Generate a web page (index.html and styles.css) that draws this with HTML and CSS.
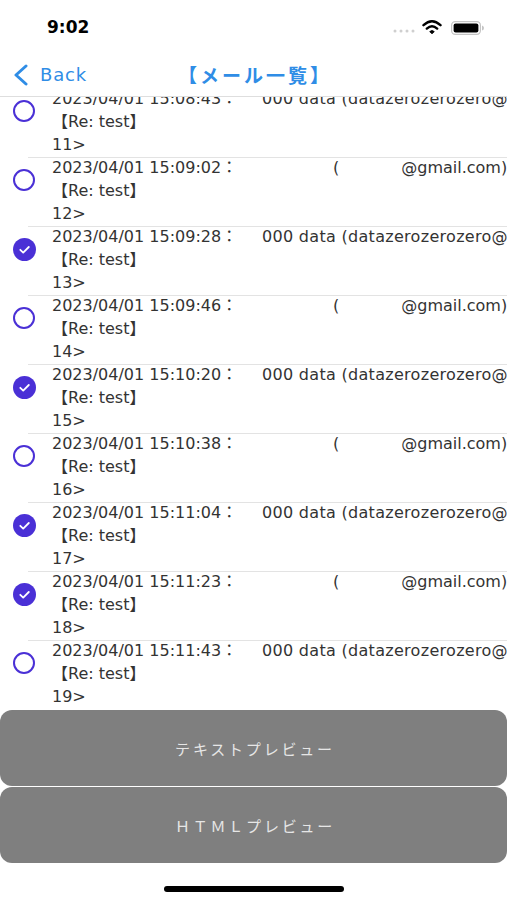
FILE: index.html
```html
<!DOCTYPE html>
<html lang="ja">
<head>
<meta charset="utf-8">
<title>メール一覧</title>
<link rel="stylesheet" href="styles.css">
</head>
<body>
<div class="screen">
  <header class="status">
    <span class="time">9:02</span>
    <svg class="status-icons" width="92" height="18" viewBox="0 0 92 18">
      <circle cx="2" cy="13" r="1.5" fill="#cfcfcf"/>
      <circle cx="8" cy="13" r="1.5" fill="#cfcfcf"/>
      <circle cx="14" cy="13" r="1.5" fill="#cfcfcf"/>
      <circle cx="20" cy="13" r="1.5" fill="#cfcfcf"/>
      <path d="M30.5 7.2 Q39 -0.6 47.5 7.2" fill="none" stroke="#000" stroke-width="2.4" stroke-linecap="round"/>
      <path d="M33.8 10.6 Q39 5.8 44.2 10.6" fill="none" stroke="#000" stroke-width="2.4" stroke-linecap="round"/>
      <path d="M36.8 13.6 L39 15.8 L41.2 13.6 Q39 11.6 36.8 13.6 Z" fill="#000" stroke="#000" stroke-width="1" stroke-linejoin="round"/>
      <rect x="58.6" y="3.6" width="28.8" height="12.8" rx="3.6" fill="none" stroke="#c4c4c4" stroke-width="1.2"/>
      <rect x="60.6" y="5.6" width="24.8" height="8.8" rx="2" fill="#000"/>
      <path d="M89 7.5 Q91 8 91 10 Q91 12 89 12.5 Z" fill="#c4c4c4"/>
    </svg>
  </header>

  <nav class="navbar">
    <a class="back">
      <svg class="chev" width="16" height="22" viewBox="0 0 16 22"><path d="M13 2 L3 11 L13 20" fill="none" stroke="currentColor" stroke-width="3" stroke-linecap="round" stroke-linejoin="round"/></svg>
      <span>Back</span>
    </a>
    <h1 class="title">【メール一覧】</h1>
    <span class="nav-spacer"></span>
  </nav>

  <main class="list">
    <div class="list-inner">
      <div class="row">
        <div class="check-col"><span class="check"></span></div>
        <div class="text">
          <div class="line"><span class="date">2023/04/01 15:08:43：</span><span class="from">000 data (datazerozerozero@gmail.com)</span></div>
          <div class="line">【Re: test】</div>
          <div class="line">11&gt;</div>
        </div>
      </div>
      <div class="row">
        <div class="check-col"><span class="check"></span></div>
        <div class="text">
          <div class="line"><span class="date">2023/04/01 15:09:02：</span><span class="masked"><span class="paren">(</span><span class="blank"></span>@gmail.com)</span></div>
          <div class="line">【Re: test】</div>
          <div class="line">12&gt;</div>
        </div>
      </div>
      <div class="row">
        <div class="check-col"><span class="check on"><svg width="23" height="23" viewBox="0 0 23 23"><path d="M7.3 11.8 L10.2 14.6 L15.8 9" fill="none" stroke="#fff" stroke-width="1.8" stroke-linecap="round" stroke-linejoin="round"/></svg></span></div>
        <div class="text">
          <div class="line"><span class="date">2023/04/01 15:09:28：</span><span class="from">000 data (datazerozerozero@gmail.com)</span></div>
          <div class="line">【Re: test】</div>
          <div class="line">13&gt;</div>
        </div>
      </div>
      <div class="row">
        <div class="check-col"><span class="check"></span></div>
        <div class="text">
          <div class="line"><span class="date">2023/04/01 15:09:46：</span><span class="masked"><span class="paren">(</span><span class="blank"></span>@gmail.com)</span></div>
          <div class="line">【Re: test】</div>
          <div class="line">14&gt;</div>
        </div>
      </div>
      <div class="row">
        <div class="check-col"><span class="check on"><svg width="23" height="23" viewBox="0 0 23 23"><path d="M7.3 11.8 L10.2 14.6 L15.8 9" fill="none" stroke="#fff" stroke-width="1.8" stroke-linecap="round" stroke-linejoin="round"/></svg></span></div>
        <div class="text">
          <div class="line"><span class="date">2023/04/01 15:10:20：</span><span class="from">000 data (datazerozerozero@gmail.com)</span></div>
          <div class="line">【Re: test】</div>
          <div class="line">15&gt;</div>
        </div>
      </div>
      <div class="row">
        <div class="check-col"><span class="check"></span></div>
        <div class="text">
          <div class="line"><span class="date">2023/04/01 15:10:38：</span><span class="masked"><span class="paren">(</span><span class="blank"></span>@gmail.com)</span></div>
          <div class="line">【Re: test】</div>
          <div class="line">16&gt;</div>
        </div>
      </div>
      <div class="row">
        <div class="check-col"><span class="check on"><svg width="23" height="23" viewBox="0 0 23 23"><path d="M7.3 11.8 L10.2 14.6 L15.8 9" fill="none" stroke="#fff" stroke-width="1.8" stroke-linecap="round" stroke-linejoin="round"/></svg></span></div>
        <div class="text">
          <div class="line"><span class="date">2023/04/01 15:11:04：</span><span class="from">000 data (datazerozerozero@gmail.com)</span></div>
          <div class="line">【Re: test】</div>
          <div class="line">17&gt;</div>
        </div>
      </div>
      <div class="row">
        <div class="check-col"><span class="check on"><svg width="23" height="23" viewBox="0 0 23 23"><path d="M7.3 11.8 L10.2 14.6 L15.8 9" fill="none" stroke="#fff" stroke-width="1.8" stroke-linecap="round" stroke-linejoin="round"/></svg></span></div>
        <div class="text">
          <div class="line"><span class="date">2023/04/01 15:11:23：</span><span class="masked"><span class="paren">(</span><span class="blank"></span>@gmail.com)</span></div>
          <div class="line">【Re: test】</div>
          <div class="line">18&gt;</div>
        </div>
      </div>
      <div class="row">
        <div class="check-col"><span class="check"></span></div>
        <div class="text">
          <div class="line"><span class="date">2023/04/01 15:11:43：</span><span class="from">000 data (datazerozerozero@gmail.com)</span></div>
          <div class="line">【Re: test】</div>
          <div class="line">19&gt;</div>
        </div>
      </div>
    </div>
  </main>

  <div class="actions">
    <button class="btn">テキストプレビュー</button>
    <button class="btn">ＨＴＭＬプレビュー</button>
  </div>

  <div class="home"><span class="indicator"></span></div>
</div>
</body>
</html>
```

FILE: styles.css
```css
* { box-sizing: border-box; }

html, body {
  margin: 0;
  padding: 0;
  background: #fff;
}

.screen {
  width: 507px;
  height: 900px;
  display: flex;
  flex-direction: column;
  overflow: hidden;
  background: #fff;
  font-family: "DejaVu Sans", "Noto Sans CJK JP", sans-serif;
}

/* status bar */
.status {
  height: 50px;
  flex: none;
  display: flex;
  align-items: center;
  justify-content: space-between;
  padding: 3px 22px 0 47px;
}
.time {
  font-family: "DejaVu Sans", sans-serif;
  font-weight: bold;
  font-size: 17px;
  color: #000;
}
.status-icons {
  display: block;
  margin-top: 1px;
}

/* navigation bar */
.navbar {
  height: 47px;
  flex: none;
  display: grid;
  grid-template-columns: 1fr auto 1fr;
  align-items: center;
  padding-top: 3px;
  border-bottom: 1px solid #dedede;
  color: #2f8de6;
}
.back {
  display: flex;
  align-items: center;
  gap: 11px;
  padding-left: 13px;
  font-family: "DejaVu Sans", sans-serif;
  font-size: 18px;
  letter-spacing: 0.8px;
  color: #2f8de6;
}
.chev { display: block; }
.title {
  margin: 0;
  font-family: "Noto Sans CJK JP", sans-serif;
  font-size: 19px;
  font-weight: bold;
  letter-spacing: 3px;
  color: #2f8de6;
  margin-left: 3px;
}

/* list */
.list {
  flex: 1;
  min-height: 0;
  overflow: hidden;
}
.list-inner {
  margin-top: -9px;
}
.row {
  display: flex;
  height: 69px;
  overflow: hidden;
  background-image: linear-gradient(#e3e3e3, #e3e3e3);
  background-position: 28px 0;
  background-size: 100% 1px;
  background-repeat: no-repeat;
}
.check-col {
  width: 52px;
  flex: none;
  padding: 12px 0 0 13px;
}
.check {
  display: block;
  width: 22px;
  height: 22px;
  border: 2.5px solid #4a30d6;
  border-radius: 50%;
}
.check.on {
  width: 23px;
  height: 23px;
  border: 0;
  background: #4a30d6;
}
.check.on svg { display: block; }
.text {
  flex: 1;
  min-width: 0;
  overflow: hidden;
  white-space: nowrap;
  color: #333;
  font-size: 16px;
  margin-top: -1px;
}
.line {
  height: 23px;
  line-height: 23px;
}
.date {
  display: inline-block;
  width: 210px;
}
.from {
  letter-spacing: 0.3px;
}
.masked .paren {
  margin-left: 71px;
}
.blank {
  display: inline-block;
  width: 62px;
}

/* action buttons */
.actions {
  flex: none;
  display: flex;
  flex-direction: column;
  gap: 1px;
}
.btn {
  height: 76px;
  border: 0;
  border-radius: 12px;
  background: #7f7f7f;
  color: #e6e6e6;
  font-family: "Noto Sans CJK JP", sans-serif;
  font-size: 15px;
  letter-spacing: 2.8px;
  padding: 0 0 0 3px;
}

/* home indicator */
.home {
  height: 37px;
  flex: none;
  display: flex;
  justify-content: center;
  padding-top: 23px;
}
.indicator {
  width: 180px;
  height: 6px;
  border-radius: 3px;
  background: #000;
}
```
